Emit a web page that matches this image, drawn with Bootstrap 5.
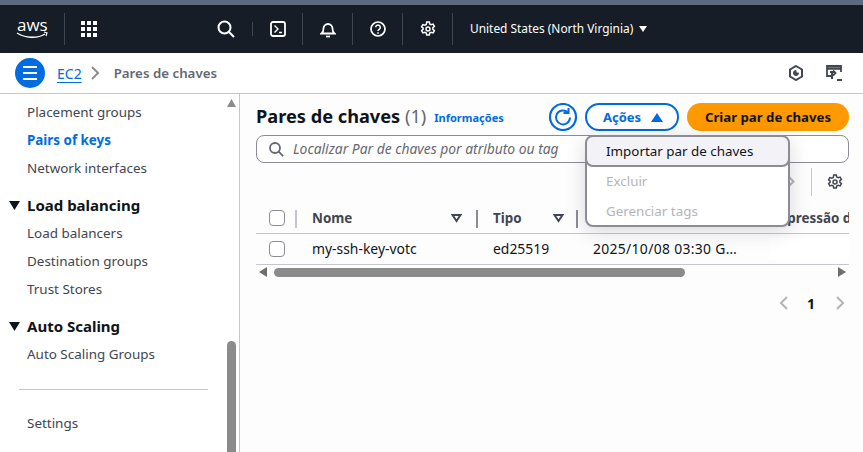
<!DOCTYPE html>
<html lang="pt"><head><meta charset="utf-8"><title>Pares de chaves</title>
<link href="https://cdn.jsdelivr.net/npm/bootstrap@5.3.0/dist/css/bootstrap.min.css" rel="stylesheet">
<style>
html,body{height:452px;overflow:hidden}
body{font-family:"Noto Sans",sans-serif;font-size:14px;color:#0f141a;background:#fff;display:flex;flex-direction:column}
.topstrip{height:5px;background:#5b6a80;flex:none}
.awsbar{height:48px;background:#161d26;color:#fff;flex:none}
.awslogo{width:48px;margin-left:16px}
.sep{width:1px;height:32px;background:#424650;flex:none}
.gridic{margin:0 0 0 16px;width:16px;height:16px}
.searchic{margin-left:120px}
.tico{width:49px;height:32px;display:flex;align-items:center;justify-content:center;flex:none}
.region{font-size:11.9px;margin-left:17px}
.crumbs{height:41px;border-bottom:1px solid #c6c6cd;flex:none;padding:0 20px 0 15px}
.burger{width:30px;height:30px;border-radius:50%;background:#006ce0;display:flex;flex-direction:column;gap:4px;align-items:center;justify-content:center}
.burger i{display:block;width:14px;height:2px;background:#fff}
.ec2{color:#006ce0;text-decoration:underline;text-underline-offset:3px;margin-left:12px;font-size:14px}
.crumbnow{color:#656871;font-weight:600;font-size:13.3px;margin-left:6px;padding-top:1px}
.shell{flex:1;min-height:0}
.sidenav{width:240px;flex:none;border-right:1px solid #c6c6cd;position:relative;background:#fff;height:100%;padding-top:8px;overflow:hidden}
.navl{display:block;height:28px;line-height:21px;padding-left:27px;color:#424650;font-size:13.45px}
.navl.on{color:#006ce0;font-weight:700;font-size:13.4px}
.navh{display:flex;align-items:center;height:24px;padding-left:9px;margin:7px 0 6px;font-weight:700;font-size:15px;color:#0f141a}
.navh svg{margin-right:7px}
.navrule{height:1px;background:#c6c6cd;margin:17px 31px 23px 19px}
.sbthumb{position:absolute;left:227px;top:247px;width:9px;height:120px;border-radius:5px 5px 0 0;background:#8b8b8b}
.sbup{position:absolute;left:227px;top:5px}
.content{flex:1;min-width:0;background:#fdfdfe;padding:9px 14px 0 16px;position:relative}
.ttl{height:28px;}
.ttl h1{font-size:18.2px;font-weight:700;margin:0;line-height:26px;height:28px;color:#0f141a}
.ttl h1 span{font-weight:400;color:#656871}
.info{font-size:11px;font-weight:700;color:#006ce0;margin-left:8px;margin-top:3px}
.refresh{width:30px;height:28px;margin-right:7px}
.actbtn{width:94px;height:28px;border:2px solid #006ce0;border-radius:14px;color:#006ce0;font-weight:700;font-size:13px;background:#fff;padding:1px 0 0 2px;margin-right:8px}
.createbtn{width:162px;height:28px;border:0;border-radius:14px;background:#ff9900;color:#0f141a;font-weight:700;font-size:13.2px;padding:1px 0 0;margin-right:0}
.searchbox{height:28px;margin-top:4px;border:1px solid #8c8c94;border-radius:8px;background:#fff;padding-left:12px;color:#656871;font-style:italic;font-size:13.85px}
.searchbox svg{margin-right:9px}
.pager1{height:42px;color:#b4b4bb;justify-content:flex-end;padding-bottom:5px}
.vdiv{width:1px;height:28px;background:#c6c6cd;margin:0 15px 0 16px}
.tbl{display:grid;grid-template-columns:39px 181px 100px 176px 97px;width:593px;overflow:hidden;height:60px}
.tcell{height:29px;display:flex;align-items:center;border-bottom:1px solid #c6c6cd;position:relative;white-space:nowrap;overflow:hidden}
.thead{font-weight:700;color:#424650;font-size:13.4px;padding-bottom:2px}
.thead svg{position:absolute}
.rowc{height:31px;font-size:13.9px}
.bar{position:absolute;top:5px;left:0;width:2px;height:18px;background:#8c8c94}
.bar.lt{background:#c6c6cd}
.chk{width:16px;height:16px;border:1px solid #8c8c94;border-radius:4px;background:#fff;margin-left:13px}
.datev{margin-left:17px;letter-spacing:.33px}
.whitep{width:80px;height:22px;background:#fff;margin-left:17px}
.hscroll{height:14px;display:flex;align-items:center;width:593px;position:relative}
.hthumb{position:absolute;left:18px;top:3px;width:411px;height:9px;border-radius:5px;background:#8b8b8b}
.pager2{margin-top:14px;width:593px;justify-content:flex-end;gap:0;font-weight:700;font-size:14px;color:#0f141a;height:20px}
.amenu{position:absolute;left:345px;top:41px;width:205px;height:92px;border:2px solid #8c8c94;border-radius:8px;background:#fff;box-shadow:0 4px 20px rgba(0,7,22,.15);z-index:5;font-size:13.4px;color:#b4b4bb;overflow:hidden}
.amenu div{height:30px;padding-left:19px;line-height:32px}
.amenu .first{background:#f3f3f7;color:#0f141a;border:2px solid #8c8c94;margin:-2px;border-radius:8px;height:32px;padding-left:19px;line-height:29px}
</style></head>
<body>
<div class="topstrip"></div>
<div class="awsbar d-flex align-items-center">
 <div class="awslogo d-flex flex-column align-items-start">
  <svg width="33" height="22" viewBox="0 0 33 22"><text x="1" y="13" font-family="Open Sans,sans-serif" font-size="17" fill="#fff">aws</text><path d="M1 15c8 5 20 6 28 1" stroke="#fff" stroke-width="1.4" fill="none"/><path d="M28 14l3 1-1 3" stroke="#fff" stroke-width="1.2" fill="none"/></svg>
 </div>
 <div class="sep"></div>
 <svg class="gridic" viewBox="0 0 16 16" fill="#fff"><rect width="4" height="4"/><rect x="6" width="4" height="4"/><rect x="12" width="4" height="4"/><rect y="6" width="4" height="4"/><rect x="6" y="6" width="4" height="4"/><rect x="12" y="6" width="4" height="4"/><rect y="12" width="4" height="4"/><rect x="6" y="12" width="4" height="4"/><rect x="12" y="12" width="4" height="4"/></svg>
 <svg class="searchic" width="18" height="18" viewBox="0 0 18 18" fill="none" stroke="#fff" stroke-width="2"><circle cx="7.500" cy="7.500" r="6"/><path d="M12 12l5 5"/></svg>
 <div class="sep" style="margin-left:17px;height:14px"></div>
 <div class="tico"><svg width="16" height="16" viewBox="0 0 16 16" fill="none" stroke="#fff" stroke-width="1.800"><rect x="1" y="1" width="14" height="14" rx="2"/><path d="M4.500 4.500L8 8l-3.500 3.500M9 11.500h3" stroke-width="1.400"/></svg></div>
 <div class="sep"></div>
 <div class="tico"><svg width="16" height="17" viewBox="0 0 16 17" fill="none" stroke="#fff" stroke-width="1.800"><path d="M1.500 12.500c1.500-1 2-2.500 2-5a4.500 4.500 0 0 1 9 0c0 2.500.5 4 2 5z"/><path d="M6 15.500h4"/></svg></div>
 <div class="sep"></div>
 <div class="tico"><svg width="16" height="16" viewBox="0 0 16 16" fill="none" stroke="#fff" stroke-width="1.700"><circle cx="8" cy="8" r="7"/><path d="M5.700 6.300a2.300 2.300 0 1 1 3.500 2c-.8.5-1.200.9-1.200 1.700" stroke-width="1.500"/><circle cx="8" cy="12" r=".5" fill="#fff" stroke-width=".8"/></svg></div>
 <div class="sep"></div>
 <div class="tico"><svg width="16" height="16" viewBox="0 0 16 16" fill="none" stroke="#fff" stroke-width="1.500"><path d="M6.700 1h2.600l.4 2 1.500.8 1.900-.7 1.300 2.300-1.500 1.300v1.600l1.500 1.300-1.300 2.300-1.900-.7-1.500.8-.4 2H6.700l-.4-2-1.500-.8-1.900.7-1.300-2.300 1.500-1.300V7.200L1.600 5.900l1.300-2.300 1.900.7 1.500-.8z"/><circle cx="8" cy="8" r="2"/></svg></div>
 <div class="sep"></div>
 <span class="region">United States (North Virginia)</span>
 <svg style="margin-left:6px" width="8" height="6" viewBox="0 0 8 6" fill="#fff"><path d="M0 0h8L4 6z"/></svg>
</div>
<div class="crumbs d-flex align-items-center bg-white">
 <div class="burger"><i></i><i></i><i></i></div>
 <span class="ec2">EC2</span>
 <svg class="mx-2" width="10" height="14" viewBox="0 0 10 14" fill="none" stroke="#8c8c94" stroke-width="2"><path d="M2 1l6 6-6 6"/></svg>
 <span class="crumbnow">Pares de chaves</span>
 <svg class="ms-auto" width="14" height="16" viewBox="0 0 14 16" fill="none" stroke="#424650" stroke-width="2"><path d="M7 1l6 3.500v7L7 15l-6-3.500v-7z"/><path d="M7 5.500a2.500 2.500 0 1 0 2.500 2.500H7z" fill="#424650" stroke-width="1"/></svg>
 <svg style="margin-left:23px" width="17" height="16" viewBox="0 0 17 16" fill="none" stroke="#424650" stroke-width="1.800"><path d="M5 11H1V1h14v6"/><path d="M1 3.500h14" stroke-width="2.500"/><path d="M4 7h5M7 5.500L9.500 8 7 10.500"/><path d="M6 8v6M11 15h5" stroke-width="2"/></svg>
</div>
<div class="shell d-flex">
 <nav class="sidenav">
  <a class="navl text-decoration-none">Placement groups</a>
  <a class="navl on text-decoration-none">Pairs of keys</a>
  <a class="navl text-decoration-none">Network interfaces</a>
  <div class="navh"><svg width="11" height="9" viewBox="0 0 11 9" fill="#0f141a"><path d="M0 0h11L5.500 9z"/></svg>Load balancing</div>
  <a class="navl text-decoration-none">Load balancers</a>
  <a class="navl text-decoration-none">Destination groups</a>
  <a class="navl text-decoration-none">Trust Stores</a>
  <div class="navh"><svg width="11" height="9" viewBox="0 0 11 9" fill="#0f141a"><path d="M0 0h11L5.500 9z"/></svg>Auto Scaling</div>
  <a class="navl text-decoration-none">Auto Scaling Groups</a>
  <div class="navrule"></div>
  <a class="navl text-decoration-none">Settings</a>
  <svg class="sbup" width="9" height="8" viewBox="0 0 9 8" fill="#8b8b8b"><path d="M4.500 0L9 8H0z"/></svg>
  <div class="sbthumb"></div>
 </nav>
 <main class="content">
  <div class="ttl d-flex align-items-center">
   <h1>Pares de chaves <span>(1)</span></h1>
   <span class="info">Informações</span>
   <svg class="ms-auto refresh" viewBox="0 0 30 28" fill="none" stroke="#006ce0"><circle cx="15" cy="14" r="13" stroke-width="2.200"/><path d="M22 14.500a7 7 0 1 1-2.200-5.200" stroke-width="2"/><path d="M20.500 5v5h-5" stroke-width="2"/></svg>
   <button class="actbtn d-flex align-items-center justify-content-center" type="button">Ações<svg style="margin-left:10px" width="12" height="9" viewBox="0 0 12 9" fill="#006ce0"><path d="M6 0l6 9H0z"/></svg></button>
   <button class="createbtn" type="button">Criar par de chaves</button>
  </div>
  <div class="searchbox d-flex align-items-center">
   <svg width="15" height="15" viewBox="0 0 15 15" fill="none" stroke="#656871" stroke-width="1.800"><circle cx="6" cy="6" r="5"/><path d="M9.700 9.700l4.500 4.500"/></svg>Localizar Par de chaves por atributo ou tag
  </div>
  <div class="pager1 d-flex align-items-center">
   <svg width="8" height="13" viewBox="0 0 8 13" fill="none" stroke="#b4b4bb" stroke-width="2"><path d="M1 1l5.500 5.500L1 12"/></svg>
   <div class="vdiv"></div>
   <svg style="margin-right:6px" width="16" height="16" viewBox="0 0 16 16" fill="none" stroke="#424650" stroke-width="1.500"><path d="M6.700 1h2.600l.4 2 1.500.8 1.900-.7 1.300 2.300-1.500 1.300v1.600l1.500 1.300-1.300 2.300-1.900-.7-1.500.8-.4 2H6.700l-.4-2-1.500-.8-1.900.7-1.300-2.300 1.500-1.300V7.200L1.600 5.900l1.300-2.300 1.900.7 1.500-.8z"/><circle cx="8" cy="8" r="2"/></svg>
  </div>
  <div class="tbl">
   <div class="tcell thead"><div class="chk"></div></div>
   <div class="tcell thead"><span class="bar lt"></span><span style="margin-left:17px">Nome</span><svg style="right:14px;top:9px" width="11" height="9" viewBox="0 0 11 9" fill="none" stroke="#424650" stroke-width="2"><path d="M1.500 1h8L5.500 7z"/></svg></div>
   <div class="tcell thead"><span class="bar"></span><span style="margin-left:17px">Tipo</span><svg style="right:12px;top:9px" width="11" height="9" viewBox="0 0 11 9" fill="none" stroke="#424650" stroke-width="2"><path d="M1.500 1h8L5.500 7z"/></svg></div>
   <div class="tcell thead"><span class="bar"></span></div>
   <div class="tcell thead"><span style="margin-left:17px">Impressão digital</span></div>
   <div class="tcell rowc"><div class="chk"></div></div>
   <div class="tcell rowc"><span style="margin-left:17px">my-ssh-key-votc</span></div>
   <div class="tcell rowc"><span style="margin-left:17px">ed25519</span></div>
   <div class="tcell rowc"><span class="datev">2025/10/08 03:30 G…</span></div>
   <div class="tcell rowc"><div class="whitep"></div></div>
  </div>
  <div class="hscroll">
   <svg style="margin-left:3px" width="8" height="10" viewBox="0 0 8 10" fill="#6e6e6e"><path d="M8 0v10L0 5z"/></svg>
   <div class="hthumb"></div>
   <svg class="ms-auto" style="margin-right:3px" width="8" height="10" viewBox="0 0 8 10" fill="#6e6e6e"><path d="M0 0v10l8-5z"/></svg>
  </div>
  <div class="pager2 d-flex align-items-center">
   <svg width="10" height="14" viewBox="0 0 10 14" fill="none" stroke="#b4b4bb" stroke-width="2"><path d="M8 1L2 7l6 6"/></svg>
   <span style="margin:0 20px 0 18px">1</span>
   <svg style="margin-right:4px" width="10" height="14" viewBox="0 0 10 14" fill="none" stroke="#b4b4bb" stroke-width="2"><path d="M2 1l6 6-6 6"/></svg>
  </div>
  <div class="amenu">
   <div class="first">Importar par de chaves</div>
   <div>Excluir</div>
   <div>Gerenciar tags</div>
  </div>
 </main>
</div>
<script src="https://cdn.jsdelivr.net/npm/bootstrap@5.3.0/dist/js/bootstrap.bundle.min.js"></script>
</body></html>
